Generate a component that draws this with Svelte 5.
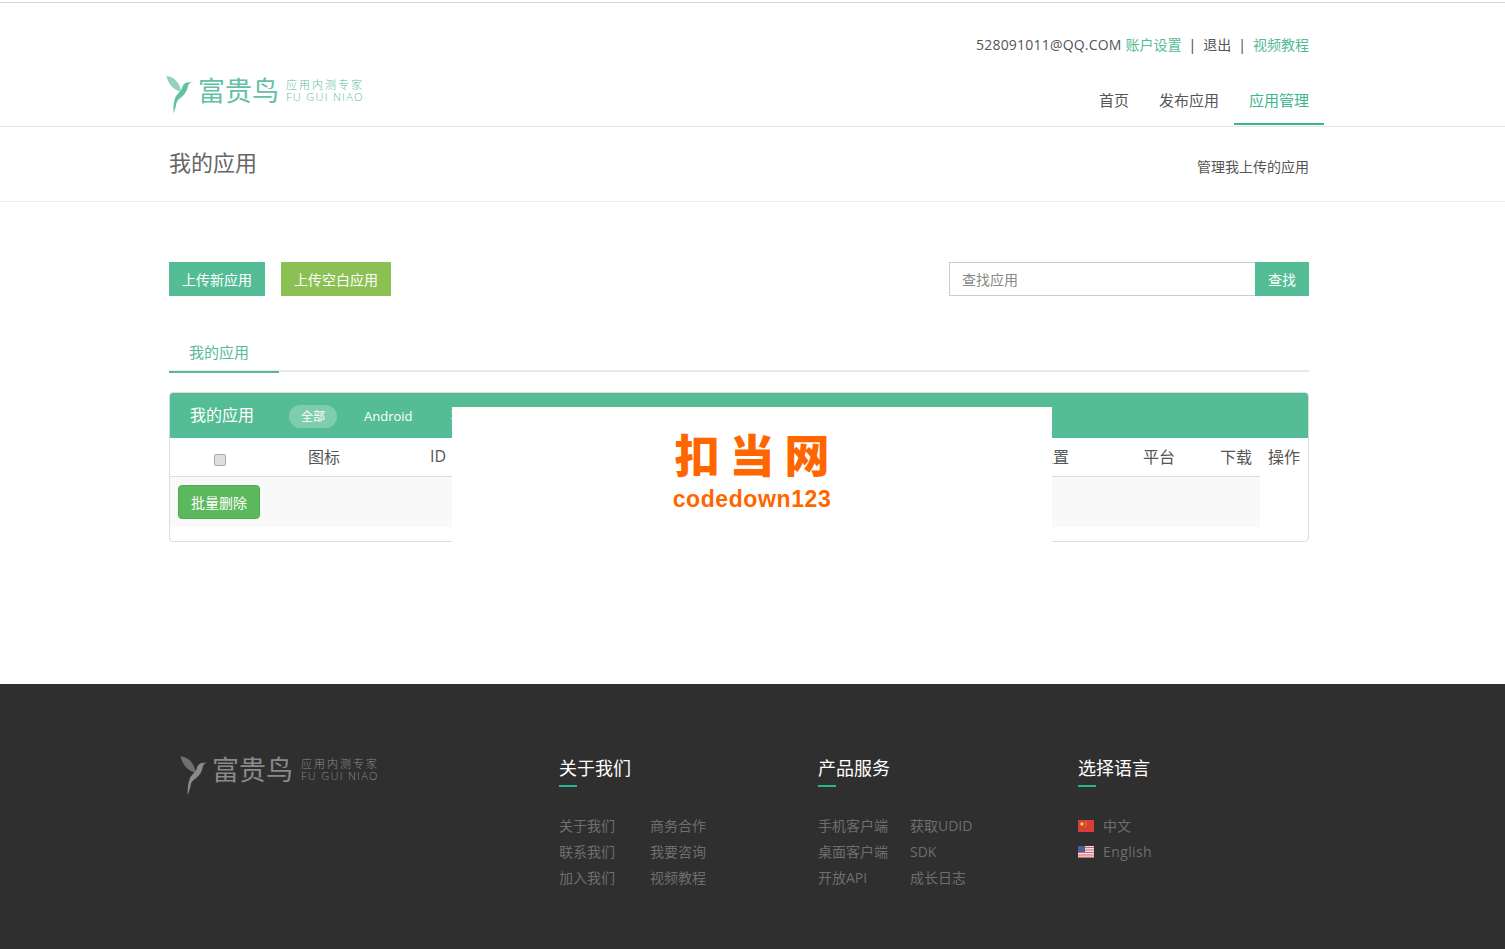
<script lang="ts">
	const navItems = [
		{ label: '首页', active: false },
		{ label: '发布应用', active: false },
		{ label: '应用管理', active: true }
	];
	const columns = ['', '图标', 'ID', '名称', '版本', '位置', '平台', '下载'];
	const footerCols = [
		{ title: '关于我们', width: 'col-a', links: [['关于我们', '联系我们', '加入我们'], ['商务合作', '我要咨询', '视频教程']], gap: 'wide' },
		{ title: '产品服务', width: 'col-b', links: [['手机客户端', '桌面客户端', '开放API'], ['获取UDID', 'SDK', '成长日志']], gap: 'narrow' }
	];
</script>

{#snippet logo()}
	<svg class="bird" viewBox="0 0 26 38" aria-hidden="true">
		<path fill="currentColor" opacity="0.7" d="M0.500 0C7 1 13.500 5 15 15.500C8 14.500 2 8 0.500 0Z" />
		<path fill="currentColor" d="M26 6L21.500 6.500C18.500 6.500 17 9 16 12C15 15 12 17 10 20C8 24 7 30 7.500 37.500C9 33.500 10 30 10.500 27C11 24.500 12.500 23.500 14.500 22C19 18.500 21.500 14 22 10C22.500 8 23.500 7 26 6Z" />
	</svg>
	<span class="logo-name">富贵鸟</span>
	<span class="logo-sub">
		<span class="logo-cn">应用内测专家</span>
		<span class="logo-en">FU GUI NIAO</span>
	</span>
{/snippet}

<div class="page">
	<header class="site-header">
		<div class="container">
			<div class="account">
				<span class="email">528091011@QQ.COM</span>
				<a href="#settings" class="link">账户设置</a>
				<span class="sep">|</span>
				<a href="#logout">退出</a>
				<span class="sep">|</span>
				<a href="#video" class="link">视频教程</a>
			</div>
			<div class="brand-row">
				<a href="#home" class="logo">{@render logo()}</a>
				<nav class="main-nav">
					{#each navItems as item}
						<a href="#nav" class="nav-item" class:active={item.active}>{item.label}</a>
					{/each}
				</nav>
			</div>
		</div>
	</header>

	<section class="page-title">
		<div class="container title-row">
			<h1>我的应用</h1>
			<span class="title-note">管理我上传的应用</span>
		</div>
	</section>

	<main class="container content">
		<div class="toolbar">
			<button class="btn btn-teal">上传新应用</button>
			<button class="btn btn-lime">上传空白应用</button>
			<form class="search">
				<input type="text" placeholder="查找应用" />
				<button type="button" class="btn btn-teal search-btn">查找</button>
			</form>
		</div>

		<div class="tabs">
			<span class="tab">我的应用</span>
		</div>

		<div class="panel">
			<div class="panel-head">
				<span class="panel-title">我的应用</span>
				<span class="filter current">全部</span>
				<span class="filter">Android</span>
				<span class="filter next">苹果</span>
			</div>
			<div class="panel-body">
				<div class="table">
					<div class="thead">
						{#each columns as col, i}
							<div class="th">
								{#if i === 0}
									<input type="checkbox" class="check" />
								{:else}
									{col}
								{/if}
							</div>
						{/each}
					</div>
					<div class="tr">
						<button class="btn-delete">批量删除</button>
					</div>
				</div>
				<div class="th ops">操作</div>
			</div>
		</div>

		<div class="watermark">
			<div class="wm-cn">扣当网</div>
			<div class="wm-en">codedown123</div>
		</div>
	</main>

	<footer class="site-footer">
		<div class="container footer-row">
			<a href="#home" class="logo footer-logo">{@render logo()}</a>
			{#each footerCols as col}
				<div class="footer-col {col.width}">
					<h4>{col.title}</h4>
					<div class="footer-links {col.gap}">
						{#each col.links as list}
							<ul>
								{#each list as text}
									<li><a href="#f">{text}</a></li>
								{/each}
							</ul>
						{/each}
					</div>
				</div>
			{/each}
			<div class="footer-col lang">
				<h4>选择语言</h4>
				<ul>
					<li>
						<svg class="flag" viewBox="0 0 16 12" aria-hidden="true">
							<rect width="16" height="12" fill="#d63f33" />
							<circle cx="4" cy="4" r="1.800" fill="#e8c94a" />
							<circle cx="7.500" cy="2" r="0.600" fill="#e8c94a" />
							<circle cx="8.500" cy="4" r="0.600" fill="#e8c94a" />
							<circle cx="7.500" cy="6.500" r="0.600" fill="#e8c94a" />
						</svg>
						<a href="#zh">中文</a>
					</li>
					<li>
						<svg class="flag" viewBox="0 0 16 12" aria-hidden="true">
							<rect width="16" height="12" fill="#eedfe2" />
							<path d="M0 1.500H16M0 4H16M0 6.500H16M0 9H16M0 11.300H16" stroke="#d0686f" stroke-width="1.200" />
							<rect width="7" height="6" fill="#4f5f96" />
						</svg>
						<a href="#en" class="lang-en">English</a>
					</li>
				</ul>
			</div>
		</div>
	</footer>
</div>

<style>
	:global(body) {
		margin: 0;
		background: #fff;
		font-family: "Open Sans", "Noto Sans CJK SC", sans-serif;
		color: #555;
	}
	.page {
		display: flex;
		flex-direction: column;
		height: 949px;
		padding-top: 2px;
		box-sizing: border-box;
		overflow: hidden;
	}
	.container {
		width: 1140px;
		margin: 0 0 0 169px;
		position: relative;
	}
	a {
		color: inherit;
		text-decoration: none;
	}
	.site-header {
		height: 123px;
		border-top: 1px solid #d6d6d6;
		border-bottom: 1px solid #e2e2e2;
		flex: none;
	}
	.account {
		display: flex;
		justify-content: flex-end;
		gap: 4px;
		padding-top: 32px;
		height: 20px;
		line-height: 20px;
		font-size: 14px;
		color: #555;
		white-space: nowrap;
	}
	.email {
		letter-spacing: 0.200px;
	}
	.sep {
		margin: 0 3px;
		color: #444;
	}
	.link {
		color: #55bb95;
	}
	.brand-row {
		display: flex;
		justify-content: space-between;
		align-items: flex-end;
		height: 71px;
		margin-right: -15px;
	}
	.logo {
		display: flex;
		align-items: center;
		height: 30px;
		color: #62c0a4;
		margin: 0 0 20px -3px;
	}
	.bird {
		flex: none;
		width: 26px;
		height: 38px;
		margin: 8px 6px 0 0;
	}
	.logo-name {
		font-size: 27px;
		line-height: 30px;
		margin-right: 7px;
		white-space: nowrap;
	}
	.logo-sub {
		display: flex;
		flex-direction: column;
		font-size: 11px;
		line-height: 12.500px;
		font-weight: 300;
		white-space: nowrap;
	}
	.logo-cn {
		letter-spacing: 2px;
	}
	.logo-en {
		letter-spacing: 1.300px;
	}
	.main-nav {
		display: flex;
		margin-bottom: 1px;
	}
	.nav-item {
		padding: 0 15px;
		height: 49px;
		line-height: 48px;
		font-size: 15px;
		color: #555;
		box-sizing: border-box;
	}
	.nav-item.active {
		color: #3db48f;
		border-bottom: 2px solid #3db48f;
	}
	.page-title {
		height: 74px;
		border-bottom: 1px solid #eeeeee;
		flex: none;
	}
	.title-row {
		display: flex;
		justify-content: space-between;
		align-items: center;
		height: 74px;
	}
	h1 {
		margin: 0 0 6px;
		font-size: 22px;
		font-weight: 400;
		color: #666;
	}
	.title-note {
		font-size: 14px;
		color: #555;
		margin-top: 4px;
	}
	.content {
		flex: 1;
		padding-top: 60px;
	}
	.toolbar {
		display: flex;
		gap: 16px;
		height: 34px;
	}
	.btn {
		border: none;
		height: 34px;
		padding: 0 13px;
		color: #fff;
		font: inherit;
		font-size: 14px;
	}
	.btn-teal {
		background: #55bd95;
	}
	.btn-lime {
		background: #8bc152;
	}
	.search {
		margin-left: auto;
		display: flex;
	}
	.search input {
		width: 306px;
		height: 34px;
		box-sizing: border-box;
		border: 1px solid #ccc;
		border-right: none;
		padding: 0 12px;
		font: inherit;
		font-size: 14px;
		outline: none;
	}
	.search input::placeholder {
		color: #888;
	}
	.search-btn {
		width: 54px;
		padding: 0;
	}
	.tabs {
		margin-top: 41px;
		height: 33px;
		border-bottom: 2px solid #e8e8e8;
		display: flex;
	}
	.tab {
		width: 110px;
		padding-left: 20px;
		height: 36px;
		box-sizing: border-box;
		line-height: 30px;
		font-size: 15px;
		color: #55bb95;
		border-bottom: 2px solid #55bb95;
	}
	.panel {
		margin-top: 20px;
		height: 150px;
		border: 1px solid #ddd;
		border-radius: 4px;
		box-sizing: border-box;
		overflow: hidden;
	}
	.panel-head {
		display: flex;
		align-items: center;
		gap: 15px;
		height: 46px;
		margin: -1px -1px 0;
		padding: 0 0 0 21px;
		background: #55bd95;
		color: #fff;
	}
	.panel-title {
		font-size: 16px;
		margin: 0 20px 2px 0;
	}
	.filter {
		padding: 0 12px;
		height: 23px;
		line-height: 23px;
		border-radius: 12px;
		font-size: 13px;
		margin-top: 3px;
	}
	.filter.current {
		background: rgba(255, 255, 255, 0.25);
		font-size: 12px;
	}
	.filter.next {
		margin-left: -1px;
	}
	.panel-body {
		display: flex;
	}
	.table {
		width: 1090px;
	}
	.thead {
		display: grid;
		grid-template-columns: 100px 108px 120px 250px 252px 106px 106px 48px;
		height: 38px;
		border-bottom: 1px solid #ddd;
	}
	.th {
		display: flex;
		align-items: center;
		justify-content: center;
		height: 38px;
		padding-bottom: 2px;
		box-sizing: border-box;
		font-size: 16px;
		color: #555;
	}
	.check {
		appearance: none;
		box-sizing: border-box;
		margin: 8px 0 0;
		width: 12px;
		height: 12px;
		background: #dedede;
		border: 1px solid #aaa;
		border-radius: 2px;
	}
	.ops {
		width: 48px;
	}
	.tr {
		height: 50px;
		background: #f9f9f9;
		padding: 8px;
		box-sizing: border-box;
	}
	.btn-delete {
		width: 82px;
		height: 34px;
		background: #5cb85c;
		color: #fff;
		border: 1px solid #4cae4c;
		border-radius: 4px;
		font: inherit;
		font-size: 14px;
		padding: 0;
	}
	.watermark {
		position: absolute;
		left: 283px;
		top: 205px;
		width: 600px;
		height: 135px;
		background: #fff;
		text-align: center;
		color: #ff6600;
		font-weight: 700;
	}
	.wm-cn {
		font-family: "Noto Sans CJK SC", sans-serif;
		font-weight: 900;
		font-size: 45px;
		line-height: 50px;
		letter-spacing: 10px;
		margin: 22px 0 0 10px;
	}
	.wm-en {
		font-family: "Liberation Sans", sans-serif;
		font-size: 23px;
		line-height: 26px;
		letter-spacing: 0.600px;
		margin-top: 7px;
	}
	.site-footer {
		height: 265px;
		flex: none;
		background: #2f2f2f;
	}
	.footer-row {
		display: flex;
		padding-top: 71px;
	}
	.footer-logo {
		color: #8a8a8a;
		width: 390px;
		margin: 0;
		padding-left: 11px;
		box-sizing: border-box;
		flex: none;
	}
	.footer-logo .bird {
		width: 27px;
		height: 40px;
		margin: 12px 5px 0 0;
	}
	.footer-logo .logo-name {
		margin-right: 8px;
	}
	.col-a {
		width: 259px;
	}
	.col-b {
		width: 260px;
	}
	h4 {
		margin: 0;
		font-size: 18px;
		font-weight: 400;
		color: #fff;
		line-height: 26px;
		padding-bottom: 6px;
	}
	h4::after {
		content: "";
		display: block;
		width: 18px;
		height: 2px;
		background: #29b391;
		margin-top: 4px;
	}
	.footer-links {
		display: flex;
		margin-top: 20px;
	}
	.footer-links.wide {
		gap: 35px;
	}
	.footer-links.narrow {
		gap: 22px;
	}
	ul {
		list-style: none;
		margin: 0;
		padding: 0;
	}
	li {
		height: 26px;
		line-height: 26px;
		font-size: 14px;
		color: #6e6e6e;
		white-space: nowrap;
	}
	.lang ul {
		margin-top: 20px;
	}
	.lang li {
		display: flex;
		align-items: center;
		gap: 9px;
	}
	.lang-en {
		letter-spacing: 0.400px;
	}
	.flag {
		width: 16px;
		height: 12px;
	}
</style>
